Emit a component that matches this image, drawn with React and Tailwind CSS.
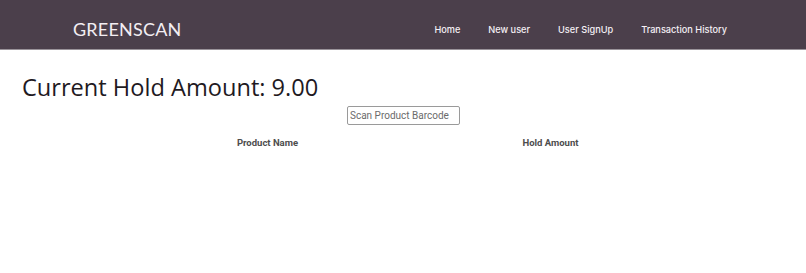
import React from "react";

const links = ["Home", "New user", "User SignUp", "Transaction History"];

const App = () => {
  return (
    <div className="min-h-[273px] bg-white">
      <nav className="h-[50px] pt-[10px] bg-[#4b3f4b] border-b border-[#9a939a] flex items-center">
        <div
          className="ml-[73px] -mt-[1px] text-[18px] text-[#f3eef3] tracking-[0.2px]"
          style={{ fontFamily: "Lato, 'Open Sans', sans-serif" }}
        >
          GREENSCAN
        </div>
        <ul
          className="ml-auto mr-[79px] flex items-center gap-[28px] text-[9.2px] font-medium text-[#f5f0f5]"
          style={{ fontFamily: "Inter, 'Open Sans', sans-serif" }}
        >
          {links.map((l) => (
            <li key={l}>{l}</li>
          ))}
        </ul>
      </nav>

      <main className="pt-[21px]">
        <h2
          className="ml-[22px] text-[23.6px] leading-[32px] text-[#1f1a1f]"
          style={{ fontFamily: "'Open Sans', sans-serif" }}
        >
          Current Hold Amount: 9.00
        </h2>
        <div className="flex justify-center mt-[3px]">
          <input
            className="ml-[1px] w-[113px] h-[19px] border border-[#9a9a9a] rounded-[2px] px-[2px] text-[10px] outline-none placeholder:text-[#6b6b6b]"
            style={{ fontFamily: "Roboto, sans-serif" }}
            placeholder="Scan Product Barcode"
          />
        </div>
        <table
          className="ml-[126px] w-[566px] mt-[9px] text-[9.5px] font-bold text-[#4d4d4d]"
          style={{ fontFamily: "Roboto, sans-serif" }}
        >
          <thead>
            <tr>
              <th className="w-1/2 text-center py-[2px]">Product Name</th>
              <th className="w-1/2 text-center py-[2px]">Hold Amount</th>
            </tr>
          </thead>
          <tbody></tbody>
        </table>
      </main>
    </div>
  );
};

export default App;
